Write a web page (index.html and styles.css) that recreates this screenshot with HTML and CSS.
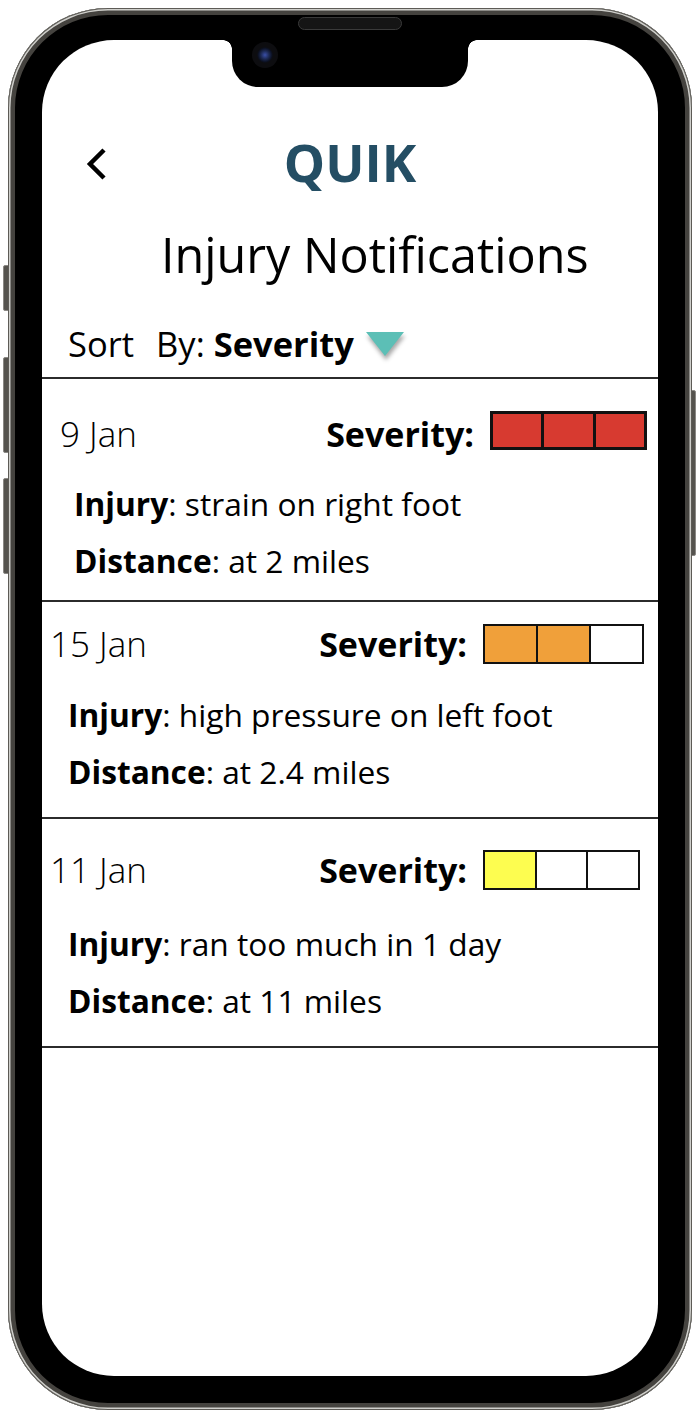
FILE: index.html
```html
<!DOCTYPE html>
<html lang="en">
<head>
    <meta charset="UTF-8">
    <meta name="viewport" content="width=device-width, initial-scale=1.0">
    <title>QUIK - Injury Notifications</title>
    <link rel="stylesheet" href="styles.css">
</head>
<body>
    <div class="device">
        <!-- side buttons -->
        <span class="side-btn silent"></span>
        <span class="side-btn vol-up"></span>
        <span class="side-btn vol-down"></span>
        <span class="side-btn power"></span>

        <div class="phone">
            <div class="speaker"></div>
            <div class="screen">
                <div class="notch"><span class="camera"></span></div>

                <header class="topbar">
                    <button class="back" aria-label="Back">
                        <svg width="22" height="34" viewBox="0 0 22 34">
                            <polyline points="18,3 4,17 18,31" fill="none" stroke="#000" stroke-width="4.5"/>
                        </svg>
                    </button>
                    <div class="brand">QUIK</div>
                </header>

                <h1 class="title">Injury Notifications</h1>

                <div class="sort">Sort<span class="by">By:</span> <b>Severity</b><svg class="caret" width="40" height="30" viewBox="0 0 40 30"><polygon points="1,1 39,1 20,25" fill="#5cbfb6"/></svg></div>

                <ul class="list">
                    <li class="card card-a">
                        <div class="card-head">
                            <span class="date">9 Jan</span>
                            <span class="sev-label">Severity:</span>
                            <span class="meter">
                                <i class="cell red"></i><i class="cell red"></i><i class="cell red"></i>
                            </span>
                        </div>
                        <p class="line"><b>Injury</b>: strain on right foot</p>
                        <p class="line"><b>Distance</b>: at 2 miles</p>
                    </li>
                    <li class="card card-b">
                        <div class="card-head">
                            <span class="date">15 Jan</span>
                            <span class="sev-label">Severity:</span>
                            <span class="meter">
                                <i class="cell orange"></i><i class="cell orange"></i><i class="cell"></i>
                            </span>
                        </div>
                        <p class="line"><b>Injury</b>: high pressure on left foot</p>
                        <p class="line"><b>Distance</b>: at 2.4 miles</p>
                    </li>
                    <li class="card card-c">
                        <div class="card-head">
                            <span class="date">11 Jan</span>
                            <span class="sev-label">Severity:</span>
                            <span class="meter">
                                <i class="cell yellow"></i><i class="cell"></i><i class="cell"></i>
                            </span>
                        </div>
                        <p class="line"><b>Injury</b>: ran too much in 1 day</p>
                        <p class="line"><b>Distance</b>: at 11 miles</p>
                    </li>
                </ul>
            </div>
        </div>
    </div>
</body>
</html>
```

FILE: styles.css
```css
body {
    margin: 0;
    background-color: #fff;
    font-family: "Open Sans", "Liberation Sans", sans-serif;
    color: #000;
}

.device {
    position: relative;
    width: 684px;
    padding: 8px;
}

/* outer frame */
.phone {
    position: relative;
    width: 616px;
    height: 1336px;
    padding: 32px 34px 34px 34px;
    background-color: #000;
    border-radius: 100px;
    box-shadow:
        inset 0 0 0 1px #5d5b56,
        inset 0 0 0 2.5px #cfcfcb,
        inset 0 0 0 7px #45433f;
}

.side-btn {
    position: absolute;
    width: 5px;
    background-color: #55534e;
    border: 1px solid #8a8884;
    border-radius: 2px;
}

.silent   { left: 3px; top: 265px; height: 44px; }
.vol-up   { left: 3px; top: 357px; height: 94px; }
.vol-down { left: 3px; top: 478px; height: 94px; }
.power    { right: 4px; top: 390px; height: 164px; }

.speaker {
    position: absolute;
    left: 290px;
    top: 9px;
    width: 102px;
    height: 11px;
    background-color: #151515;
    border: 1px solid #3a3a3a;
    border-radius: 7px;
    z-index: 2;
}

.screen {
    position: relative;
    height: 100%;
    background-color: #fff;
    border-radius: 72px;
    overflow: hidden;
}

.notch {
    position: absolute;
    left: 190px;
    top: 0;
    width: 236px;
    height: 47px;
    background-color: #000;
    border-radius: 0 0 26px 26px;
}

.notch::before,
.notch::after {
    content: "";
    position: absolute;
    top: 0;
    width: 9px;
    height: 9px;
}

.notch::before {
    left: -9px;
    background: radial-gradient(circle at 0 100%, transparent 8.5px, #000 9px);
}

.notch::after {
    right: -9px;
    background: radial-gradient(circle at 100% 100%, transparent 8.5px, #000 9px);
}

.camera {
    position: absolute;
    left: 20px;
    top: 2px;
    width: 26px;
    height: 26px;
    border-radius: 50%;
    background: radial-gradient(circle at 50% 50%, #3a4fa8 0, #1d2a55 4px, #0b1020 7px, #0d0d10 8px);
}

/* header */
.topbar {
    position: relative;
    display: flex;
    justify-content: center;
    align-items: center;
    padding-top: 92px;
    height: 60px;
}

.back {
    position: absolute;
    left: 44px;
    top: 107px;
    padding: 0;
    border: none;
    background: none;
}

.brand {
    font-size: 52px;
    line-height: 60px;
    font-weight: 700;
    color: #244e64;
}

.title {
    margin: 34px 0 0 0;
    padding-left: 119px;
    font-size: 48.5px;
    line-height: 56px;
    font-weight: 400;
}

.sort {
    margin-top: 42px;
    padding: 0 0 13px 26px;
    font-size: 34.5px;
    line-height: 40px;
    border-bottom: 2px solid #2b2b2b;
}

.by {
    margin-left: 22px;
}

.caret {
    margin-left: 11px;
    vertical-align: -4px;
    filter: drop-shadow(1px 4px 2px rgba(0, 0, 0, 0.35));
}

/* notification cards */
.list {
    margin: 0;
    padding: 0;
    list-style: none;
}

.card {
    border-bottom: 2px solid #2b2b2b;
}

.card-head {
    display: flex;
    align-items: center;
    height: 40px;
}

.date {
    font-size: 35px;
    line-height: 40px;
    font-weight: 300;
}

.sev-label {
    margin-left: auto;
    margin-right: 16px;
    font-size: 34px;
    line-height: 40px;
    font-weight: 700;
}

.meter {
    display: flex;
    width: 157px;
    height: 39px;
    box-sizing: border-box;
    border: 3px solid #111;
}

.cell {
    flex: 1;
    background-color: #fff;
}

.cell + .cell {
    border-left: 3px solid #111;
}

.red { background-color: #d73a30; }
.orange { background-color: #f0a03a; }
.yellow { background-color: #fdfd50; }

.line {
    margin: 0;
    font-size: 31.7px;
    line-height: 57px;
}

.line b {
    font-weight: 700;
}

.card-a {
    padding: 35px 11px 11px 18px;
}

.card-a .meter {
    margin-top: -7px;
}

.card-a .card-head {
    margin-bottom: 21px;
}

.card-a .line {
    margin-left: 14px;
}

.card-b {
    padding: 22px 14px 17px 8px;
}

.card-b .meter {
    width: 161px;
    height: 40px;
    border-width: 2px;
}

.card-b .cell + .cell {
    border-left-width: 2px;
}

.card-b .card-head {
    margin-bottom: 22px;
}

.card-c {
    padding: 31px 18px 17px 8px;
}

.card-c .meter {
    height: 40px;
    border-width: 2px;
}

.card-c .cell + .cell {
    border-left-width: 2px;
}

.card-c .card-head {
    margin-bottom: 25px;
}

.card-b .line,
.card-c .line {
    margin-left: 18px;
}
```
